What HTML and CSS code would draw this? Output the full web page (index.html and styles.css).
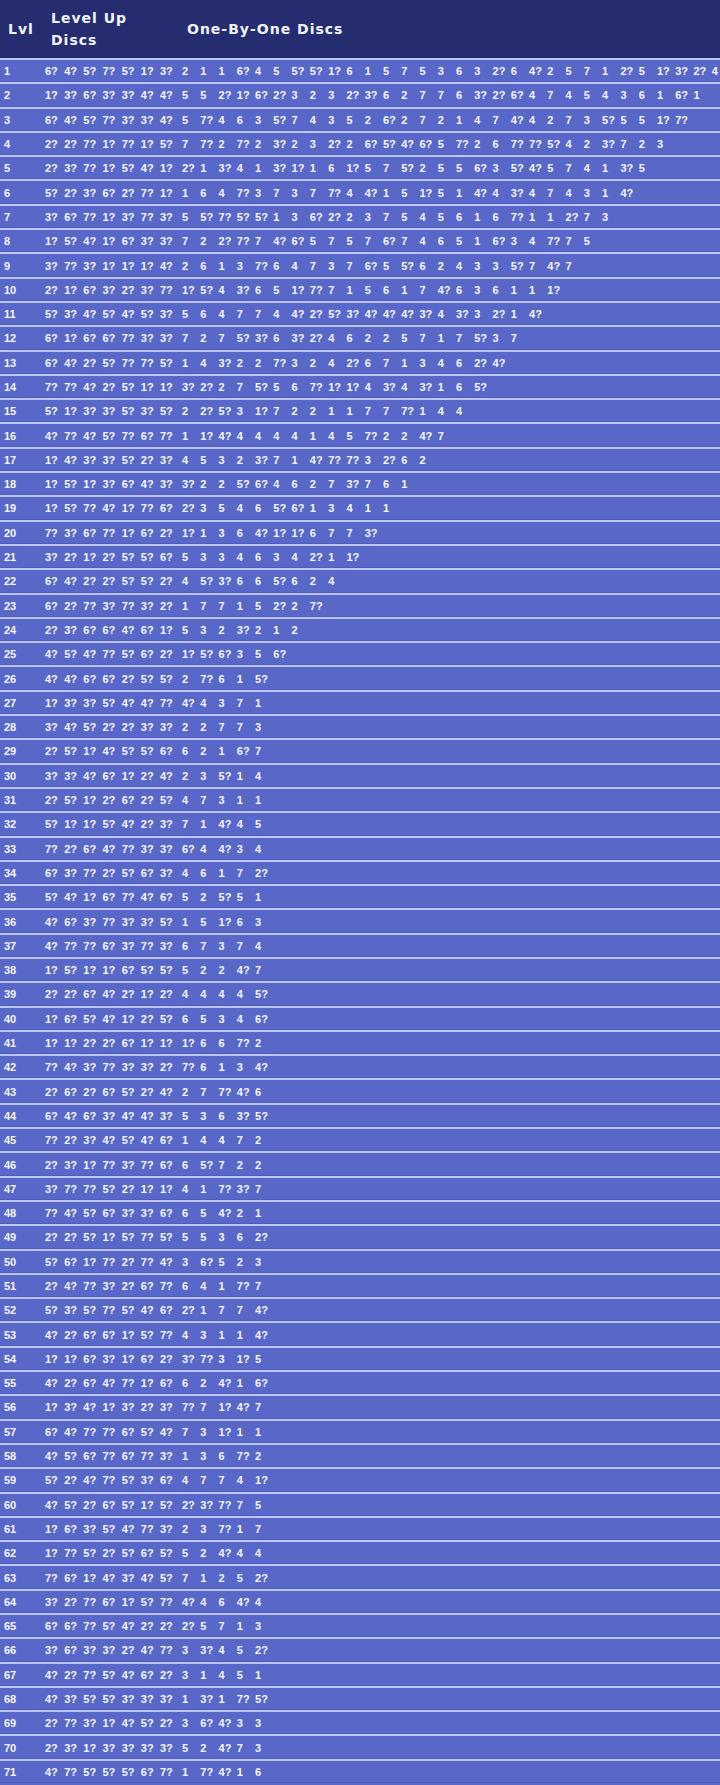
FILE: index.html
```html
<!DOCTYPE html>
<html lang="en">
<head>
<meta charset="utf-8">
<title>Disc Table</title>
<link rel="stylesheet" href="styles.css">
</head>
<body>
<div class="table">
  <div class="head">
    <div class="h-lvl">Lvl</div>
    <div class="h-lu">Level Up<br>Discs</div>
    <div class="h-obo">One-By-One Discs</div>
  </div>
  <div class="row"><div class="lvl">1</div><div class="lu"><span>6?</span><span>4?</span><span>5?</span><span>7?</span><span>5?</span><span>1?</span><span>3?</span></div><div class="obo"><span>2</span><span>1</span><span>1</span><span>6?</span><span>4</span><span>5</span><span>5?</span><span>5?</span><span>1?</span><span>6</span><span>1</span><span>5</span><span>7</span><span>5</span><span>3</span><span>6</span><span>3</span><span>2?</span><span>6</span><span>4?</span><span>2</span><span>5</span><span>7</span><span>1</span><span>2?</span><span>5</span><span>1?</span><span>3?</span><span>2?</span><span>4</span></div></div>
  <div class="row"><div class="lvl">2</div><div class="lu"><span>1?</span><span>3?</span><span>6?</span><span>3?</span><span>3?</span><span>4?</span><span>4?</span></div><div class="obo"><span>5</span><span>5</span><span>2?</span><span>1?</span><span>6?</span><span>2?</span><span>3</span><span>2</span><span>3</span><span>2?</span><span>3?</span><span>6</span><span>2</span><span>7</span><span>7</span><span>6</span><span>3?</span><span>2?</span><span>6?</span><span>4</span><span>7</span><span>4</span><span>5</span><span>4</span><span>3</span><span>6</span><span>1</span><span>6?</span><span>1</span></div></div>
  <div class="row"><div class="lvl">3</div><div class="lu"><span>6?</span><span>4?</span><span>5?</span><span>7?</span><span>3?</span><span>3?</span><span>4?</span></div><div class="obo"><span>5</span><span>7?</span><span>4</span><span>6</span><span>3</span><span>5?</span><span>7</span><span>4</span><span>3</span><span>5</span><span>2</span><span>6?</span><span>2</span><span>7</span><span>2</span><span>1</span><span>4</span><span>7</span><span>4?</span><span>4</span><span>2</span><span>7</span><span>3</span><span>5?</span><span>5</span><span>5</span><span>1?</span><span>7?</span></div></div>
  <div class="row"><div class="lvl">4</div><div class="lu"><span>2?</span><span>2?</span><span>7?</span><span>1?</span><span>7?</span><span>1?</span><span>5?</span></div><div class="obo"><span>7</span><span>7?</span><span>2</span><span>7?</span><span>2</span><span>3?</span><span>2</span><span>3</span><span>2?</span><span>2</span><span>6?</span><span>5?</span><span>4?</span><span>6?</span><span>5</span><span>7?</span><span>2</span><span>6</span><span>7?</span><span>7?</span><span>5?</span><span>4</span><span>2</span><span>3?</span><span>7</span><span>2</span><span>3</span></div></div>
  <div class="row"><div class="lvl">5</div><div class="lu"><span>2?</span><span>3?</span><span>7?</span><span>1?</span><span>5?</span><span>4?</span><span>1?</span></div><div class="obo"><span>2?</span><span>1</span><span>3?</span><span>4</span><span>1</span><span>3?</span><span>1?</span><span>1</span><span>6</span><span>1?</span><span>5</span><span>7</span><span>5?</span><span>2</span><span>5</span><span>5</span><span>6?</span><span>3</span><span>5?</span><span>4?</span><span>5</span><span>7</span><span>4</span><span>1</span><span>3?</span><span>5</span></div></div>
  <div class="row"><div class="lvl">6</div><div class="lu"><span>5?</span><span>2?</span><span>3?</span><span>6?</span><span>2?</span><span>7?</span><span>1?</span></div><div class="obo"><span>1</span><span>6</span><span>4</span><span>7?</span><span>3</span><span>7</span><span>3</span><span>7</span><span>7?</span><span>4</span><span>4?</span><span>1</span><span>5</span><span>1?</span><span>5</span><span>1</span><span>4?</span><span>4</span><span>3?</span><span>4</span><span>7</span><span>4</span><span>3</span><span>1</span><span>4?</span></div></div>
  <div class="row"><div class="lvl">7</div><div class="lu"><span>3?</span><span>6?</span><span>7?</span><span>1?</span><span>3?</span><span>7?</span><span>3?</span></div><div class="obo"><span>5</span><span>5?</span><span>7?</span><span>5?</span><span>5?</span><span>1</span><span>3</span><span>6?</span><span>2?</span><span>2</span><span>3</span><span>7</span><span>5</span><span>4</span><span>5</span><span>6</span><span>1</span><span>6</span><span>7?</span><span>1</span><span>1</span><span>2?</span><span>7</span><span>3</span></div></div>
  <div class="row"><div class="lvl">8</div><div class="lu"><span>1?</span><span>5?</span><span>4?</span><span>1?</span><span>6?</span><span>3?</span><span>3?</span></div><div class="obo"><span>7</span><span>2</span><span>2?</span><span>7?</span><span>7</span><span>4?</span><span>6?</span><span>5</span><span>7</span><span>5</span><span>7</span><span>6?</span><span>7</span><span>4</span><span>6</span><span>5</span><span>1</span><span>6?</span><span>3</span><span>4</span><span>7?</span><span>7</span><span>5</span></div></div>
  <div class="row"><div class="lvl">9</div><div class="lu"><span>3?</span><span>7?</span><span>3?</span><span>1?</span><span>1?</span><span>1?</span><span>4?</span></div><div class="obo"><span>2</span><span>6</span><span>1</span><span>3</span><span>7?</span><span>6</span><span>4</span><span>7</span><span>3</span><span>7</span><span>6?</span><span>5</span><span>5?</span><span>6</span><span>2</span><span>4</span><span>3</span><span>3</span><span>5?</span><span>7</span><span>4?</span><span>7</span></div></div>
  <div class="row"><div class="lvl">10</div><div class="lu"><span>2?</span><span>1?</span><span>6?</span><span>3?</span><span>2?</span><span>3?</span><span>7?</span></div><div class="obo"><span>1?</span><span>5?</span><span>4</span><span>3?</span><span>6</span><span>5</span><span>1?</span><span>7?</span><span>7</span><span>1</span><span>5</span><span>6</span><span>1</span><span>7</span><span>4?</span><span>6</span><span>3</span><span>6</span><span>1</span><span>1</span><span>1?</span></div></div>
  <div class="row"><div class="lvl">11</div><div class="lu"><span>5?</span><span>3?</span><span>4?</span><span>5?</span><span>4?</span><span>5?</span><span>3?</span></div><div class="obo"><span>5</span><span>6</span><span>4</span><span>7</span><span>7</span><span>4</span><span>4?</span><span>2?</span><span>5?</span><span>3?</span><span>4?</span><span>4?</span><span>4?</span><span>3?</span><span>4</span><span>3?</span><span>3</span><span>2?</span><span>1</span><span>4?</span></div></div>
  <div class="row"><div class="lvl">12</div><div class="lu"><span>6?</span><span>1?</span><span>6?</span><span>6?</span><span>7?</span><span>3?</span><span>3?</span></div><div class="obo"><span>7</span><span>2</span><span>7</span><span>5?</span><span>3?</span><span>6</span><span>3?</span><span>2?</span><span>4</span><span>6</span><span>2</span><span>2</span><span>5</span><span>7</span><span>1</span><span>7</span><span>5?</span><span>3</span><span>7</span></div></div>
  <div class="row"><div class="lvl">13</div><div class="lu"><span>6?</span><span>4?</span><span>2?</span><span>5?</span><span>7?</span><span>7?</span><span>5?</span></div><div class="obo"><span>1</span><span>4</span><span>3?</span><span>2</span><span>2</span><span>7?</span><span>3</span><span>2</span><span>4</span><span>2?</span><span>6</span><span>7</span><span>1</span><span>3</span><span>4</span><span>6</span><span>2?</span><span>4?</span></div></div>
  <div class="row"><div class="lvl">14</div><div class="lu"><span>7?</span><span>7?</span><span>4?</span><span>2?</span><span>5?</span><span>1?</span><span>1?</span></div><div class="obo"><span>3?</span><span>2?</span><span>2</span><span>7</span><span>5?</span><span>5</span><span>6</span><span>7?</span><span>1?</span><span>1?</span><span>4</span><span>3?</span><span>4</span><span>3?</span><span>1</span><span>6</span><span>5?</span></div></div>
  <div class="row"><div class="lvl">15</div><div class="lu"><span>5?</span><span>1?</span><span>3?</span><span>3?</span><span>5?</span><span>3?</span><span>5?</span></div><div class="obo"><span>2</span><span>2?</span><span>5?</span><span>3</span><span>1?</span><span>7</span><span>2</span><span>2</span><span>1</span><span>1</span><span>7</span><span>7</span><span>7?</span><span>1</span><span>4</span><span>4</span></div></div>
  <div class="row"><div class="lvl">16</div><div class="lu"><span>4?</span><span>7?</span><span>4?</span><span>5?</span><span>7?</span><span>6?</span><span>7?</span></div><div class="obo"><span>1</span><span>1?</span><span>4?</span><span>4</span><span>4</span><span>4</span><span>4</span><span>1</span><span>4</span><span>5</span><span>7?</span><span>2</span><span>2</span><span>4?</span><span>7</span></div></div>
  <div class="row"><div class="lvl">17</div><div class="lu"><span>1?</span><span>4?</span><span>3?</span><span>3?</span><span>5?</span><span>2?</span><span>3?</span></div><div class="obo"><span>4</span><span>5</span><span>3</span><span>2</span><span>3?</span><span>7</span><span>1</span><span>4?</span><span>7?</span><span>7?</span><span>3</span><span>2?</span><span>6</span><span>2</span></div></div>
  <div class="row"><div class="lvl">18</div><div class="lu"><span>1?</span><span>5?</span><span>1?</span><span>3?</span><span>6?</span><span>4?</span><span>3?</span></div><div class="obo"><span>3?</span><span>2</span><span>2</span><span>5?</span><span>6?</span><span>4</span><span>6</span><span>2</span><span>7</span><span>3?</span><span>7</span><span>6</span><span>1</span></div></div>
  <div class="row"><div class="lvl">19</div><div class="lu"><span>1?</span><span>5?</span><span>7?</span><span>4?</span><span>1?</span><span>7?</span><span>6?</span></div><div class="obo"><span>2?</span><span>3</span><span>5</span><span>4</span><span>6</span><span>5?</span><span>6?</span><span>1</span><span>3</span><span>4</span><span>1</span><span>1</span></div></div>
  <div class="row"><div class="lvl">20</div><div class="lu"><span>7?</span><span>3?</span><span>6?</span><span>7?</span><span>1?</span><span>6?</span><span>2?</span></div><div class="obo"><span>1?</span><span>1</span><span>3</span><span>6</span><span>4?</span><span>1?</span><span>1?</span><span>6</span><span>7</span><span>7</span><span>3?</span></div></div>
  <div class="row"><div class="lvl">21</div><div class="lu"><span>3?</span><span>2?</span><span>1?</span><span>2?</span><span>5?</span><span>5?</span><span>6?</span></div><div class="obo"><span>5</span><span>3</span><span>3</span><span>4</span><span>6</span><span>3</span><span>4</span><span>2?</span><span>1</span><span>1?</span></div></div>
  <div class="row"><div class="lvl">22</div><div class="lu"><span>6?</span><span>4?</span><span>2?</span><span>2?</span><span>5?</span><span>5?</span><span>2?</span></div><div class="obo"><span>4</span><span>5?</span><span>3?</span><span>6</span><span>6</span><span>5?</span><span>6</span><span>2</span><span>4</span></div></div>
  <div class="row"><div class="lvl">23</div><div class="lu"><span>6?</span><span>2?</span><span>7?</span><span>3?</span><span>7?</span><span>3?</span><span>2?</span></div><div class="obo"><span>1</span><span>7</span><span>7</span><span>1</span><span>5</span><span>2?</span><span>2</span><span>7?</span></div></div>
  <div class="row"><div class="lvl">24</div><div class="lu"><span>2?</span><span>3?</span><span>6?</span><span>6?</span><span>4?</span><span>6?</span><span>1?</span></div><div class="obo"><span>5</span><span>3</span><span>2</span><span>3?</span><span>2</span><span>1</span><span>2</span></div></div>
  <div class="row"><div class="lvl">25</div><div class="lu"><span>4?</span><span>5?</span><span>4?</span><span>7?</span><span>5?</span><span>6?</span><span>2?</span></div><div class="obo"><span>1?</span><span>5?</span><span>6?</span><span>3</span><span>5</span><span>6?</span></div></div>
  <div class="row"><div class="lvl">26</div><div class="lu"><span>4?</span><span>4?</span><span>6?</span><span>6?</span><span>2?</span><span>5?</span><span>5?</span></div><div class="obo"><span>2</span><span>7?</span><span>6</span><span>1</span><span>5?</span></div></div>
  <div class="row"><div class="lvl">27</div><div class="lu"><span>1?</span><span>3?</span><span>3?</span><span>5?</span><span>4?</span><span>4?</span><span>7?</span></div><div class="obo"><span>4?</span><span>4</span><span>3</span><span>7</span><span>1</span></div></div>
  <div class="row"><div class="lvl">28</div><div class="lu"><span>3?</span><span>4?</span><span>5?</span><span>2?</span><span>2?</span><span>3?</span><span>3?</span></div><div class="obo"><span>2</span><span>2</span><span>7</span><span>7</span><span>3</span></div></div>
  <div class="row"><div class="lvl">29</div><div class="lu"><span>2?</span><span>5?</span><span>1?</span><span>4?</span><span>5?</span><span>5?</span><span>6?</span></div><div class="obo"><span>6</span><span>2</span><span>1</span><span>6?</span><span>7</span></div></div>
  <div class="row"><div class="lvl">30</div><div class="lu"><span>3?</span><span>3?</span><span>4?</span><span>6?</span><span>1?</span><span>2?</span><span>4?</span></div><div class="obo"><span>2</span><span>3</span><span>5?</span><span>1</span><span>4</span></div></div>
  <div class="row"><div class="lvl">31</div><div class="lu"><span>2?</span><span>5?</span><span>1?</span><span>2?</span><span>6?</span><span>2?</span><span>5?</span></div><div class="obo"><span>4</span><span>7</span><span>3</span><span>1</span><span>1</span></div></div>
  <div class="row"><div class="lvl">32</div><div class="lu"><span>5?</span><span>1?</span><span>1?</span><span>5?</span><span>4?</span><span>2?</span><span>3?</span></div><div class="obo"><span>7</span><span>1</span><span>4?</span><span>4</span><span>5</span></div></div>
  <div class="row"><div class="lvl">33</div><div class="lu"><span>7?</span><span>2?</span><span>6?</span><span>4?</span><span>7?</span><span>3?</span><span>3?</span></div><div class="obo"><span>6?</span><span>4</span><span>4?</span><span>3</span><span>4</span></div></div>
  <div class="row"><div class="lvl">34</div><div class="lu"><span>6?</span><span>3?</span><span>7?</span><span>2?</span><span>5?</span><span>6?</span><span>3?</span></div><div class="obo"><span>4</span><span>6</span><span>1</span><span>7</span><span>2?</span></div></div>
  <div class="row"><div class="lvl">35</div><div class="lu"><span>5?</span><span>4?</span><span>1?</span><span>6?</span><span>7?</span><span>4?</span><span>6?</span></div><div class="obo"><span>5</span><span>2</span><span>5?</span><span>5</span><span>1</span></div></div>
  <div class="row"><div class="lvl">36</div><div class="lu"><span>4?</span><span>6?</span><span>3?</span><span>7?</span><span>3?</span><span>3?</span><span>5?</span></div><div class="obo"><span>1</span><span>5</span><span>1?</span><span>6</span><span>3</span></div></div>
  <div class="row"><div class="lvl">37</div><div class="lu"><span>4?</span><span>7?</span><span>7?</span><span>6?</span><span>3?</span><span>7?</span><span>3?</span></div><div class="obo"><span>6</span><span>7</span><span>3</span><span>7</span><span>4</span></div></div>
  <div class="row"><div class="lvl">38</div><div class="lu"><span>1?</span><span>5?</span><span>1?</span><span>1?</span><span>6?</span><span>5?</span><span>5?</span></div><div class="obo"><span>5</span><span>2</span><span>2</span><span>4?</span><span>7</span></div></div>
  <div class="row"><div class="lvl">39</div><div class="lu"><span>2?</span><span>2?</span><span>6?</span><span>4?</span><span>2?</span><span>1?</span><span>2?</span></div><div class="obo"><span>4</span><span>4</span><span>4</span><span>4</span><span>5?</span></div></div>
  <div class="row"><div class="lvl">40</div><div class="lu"><span>1?</span><span>6?</span><span>5?</span><span>4?</span><span>1?</span><span>2?</span><span>5?</span></div><div class="obo"><span>6</span><span>5</span><span>3</span><span>4</span><span>6?</span></div></div>
  <div class="row"><div class="lvl">41</div><div class="lu"><span>1?</span><span>1?</span><span>2?</span><span>2?</span><span>6?</span><span>1?</span><span>1?</span></div><div class="obo"><span>1?</span><span>6</span><span>6</span><span>7?</span><span>2</span></div></div>
  <div class="row"><div class="lvl">42</div><div class="lu"><span>7?</span><span>4?</span><span>3?</span><span>7?</span><span>3?</span><span>3?</span><span>2?</span></div><div class="obo"><span>7?</span><span>6</span><span>1</span><span>3</span><span>4?</span></div></div>
  <div class="row"><div class="lvl">43</div><div class="lu"><span>2?</span><span>6?</span><span>2?</span><span>6?</span><span>5?</span><span>2?</span><span>4?</span></div><div class="obo"><span>2</span><span>7</span><span>7?</span><span>4?</span><span>6</span></div></div>
  <div class="row"><div class="lvl">44</div><div class="lu"><span>6?</span><span>4?</span><span>6?</span><span>3?</span><span>4?</span><span>4?</span><span>3?</span></div><div class="obo"><span>5</span><span>3</span><span>6</span><span>3?</span><span>5?</span></div></div>
  <div class="row"><div class="lvl">45</div><div class="lu"><span>7?</span><span>2?</span><span>3?</span><span>4?</span><span>5?</span><span>4?</span><span>6?</span></div><div class="obo"><span>1</span><span>4</span><span>4</span><span>7</span><span>2</span></div></div>
  <div class="row"><div class="lvl">46</div><div class="lu"><span>2?</span><span>3?</span><span>1?</span><span>7?</span><span>3?</span><span>7?</span><span>6?</span></div><div class="obo"><span>6</span><span>5?</span><span>7</span><span>2</span><span>2</span></div></div>
  <div class="row"><div class="lvl">47</div><div class="lu"><span>3?</span><span>7?</span><span>7?</span><span>5?</span><span>2?</span><span>1?</span><span>1?</span></div><div class="obo"><span>4</span><span>1</span><span>7?</span><span>3?</span><span>7</span></div></div>
  <div class="row"><div class="lvl">48</div><div class="lu"><span>7?</span><span>4?</span><span>5?</span><span>6?</span><span>3?</span><span>3?</span><span>6?</span></div><div class="obo"><span>6</span><span>5</span><span>4?</span><span>2</span><span>1</span></div></div>
  <div class="row"><div class="lvl">49</div><div class="lu"><span>2?</span><span>2?</span><span>5?</span><span>1?</span><span>5?</span><span>7?</span><span>5?</span></div><div class="obo"><span>5</span><span>5</span><span>3</span><span>6</span><span>2?</span></div></div>
  <div class="row"><div class="lvl">50</div><div class="lu"><span>5?</span><span>6?</span><span>1?</span><span>7?</span><span>2?</span><span>7?</span><span>4?</span></div><div class="obo"><span>3</span><span>6?</span><span>5</span><span>2</span><span>3</span></div></div>
  <div class="row"><div class="lvl">51</div><div class="lu"><span>2?</span><span>4?</span><span>7?</span><span>3?</span><span>2?</span><span>6?</span><span>7?</span></div><div class="obo"><span>6</span><span>4</span><span>1</span><span>7?</span><span>7</span></div></div>
  <div class="row"><div class="lvl">52</div><div class="lu"><span>5?</span><span>3?</span><span>5?</span><span>7?</span><span>5?</span><span>4?</span><span>6?</span></div><div class="obo"><span>2?</span><span>1</span><span>7</span><span>7</span><span>4?</span></div></div>
  <div class="row"><div class="lvl">53</div><div class="lu"><span>4?</span><span>2?</span><span>6?</span><span>6?</span><span>1?</span><span>5?</span><span>7?</span></div><div class="obo"><span>4</span><span>3</span><span>1</span><span>1</span><span>4?</span></div></div>
  <div class="row"><div class="lvl">54</div><div class="lu"><span>1?</span><span>1?</span><span>6?</span><span>3?</span><span>1?</span><span>6?</span><span>2?</span></div><div class="obo"><span>3?</span><span>7?</span><span>3</span><span>1?</span><span>5</span></div></div>
  <div class="row"><div class="lvl">55</div><div class="lu"><span>4?</span><span>2?</span><span>6?</span><span>4?</span><span>7?</span><span>1?</span><span>6?</span></div><div class="obo"><span>6</span><span>2</span><span>4?</span><span>1</span><span>6?</span></div></div>
  <div class="row"><div class="lvl">56</div><div class="lu"><span>1?</span><span>3?</span><span>4?</span><span>1?</span><span>3?</span><span>2?</span><span>3?</span></div><div class="obo"><span>7?</span><span>7</span><span>1?</span><span>4?</span><span>7</span></div></div>
  <div class="row"><div class="lvl">57</div><div class="lu"><span>6?</span><span>4?</span><span>7?</span><span>7?</span><span>6?</span><span>5?</span><span>4?</span></div><div class="obo"><span>7</span><span>3</span><span>1?</span><span>1</span><span>1</span></div></div>
  <div class="row"><div class="lvl">58</div><div class="lu"><span>4?</span><span>5?</span><span>6?</span><span>7?</span><span>6?</span><span>7?</span><span>3?</span></div><div class="obo"><span>1</span><span>3</span><span>6</span><span>7?</span><span>2</span></div></div>
  <div class="row"><div class="lvl">59</div><div class="lu"><span>5?</span><span>2?</span><span>4?</span><span>7?</span><span>5?</span><span>3?</span><span>6?</span></div><div class="obo"><span>4</span><span>7</span><span>7</span><span>4</span><span>1?</span></div></div>
  <div class="row"><div class="lvl">60</div><div class="lu"><span>4?</span><span>5?</span><span>2?</span><span>6?</span><span>5?</span><span>1?</span><span>5?</span></div><div class="obo"><span>2?</span><span>3?</span><span>7?</span><span>7</span><span>5</span></div></div>
  <div class="row"><div class="lvl">61</div><div class="lu"><span>1?</span><span>6?</span><span>3?</span><span>5?</span><span>4?</span><span>7?</span><span>3?</span></div><div class="obo"><span>2</span><span>3</span><span>7?</span><span>1</span><span>7</span></div></div>
  <div class="row"><div class="lvl">62</div><div class="lu"><span>1?</span><span>7?</span><span>5?</span><span>2?</span><span>5?</span><span>6?</span><span>5?</span></div><div class="obo"><span>5</span><span>2</span><span>4?</span><span>4</span><span>4</span></div></div>
  <div class="row"><div class="lvl">63</div><div class="lu"><span>7?</span><span>6?</span><span>1?</span><span>4?</span><span>3?</span><span>4?</span><span>5?</span></div><div class="obo"><span>7</span><span>1</span><span>2</span><span>5</span><span>2?</span></div></div>
  <div class="row"><div class="lvl">64</div><div class="lu"><span>3?</span><span>2?</span><span>7?</span><span>6?</span><span>1?</span><span>5?</span><span>7?</span></div><div class="obo"><span>4?</span><span>4</span><span>6</span><span>4?</span><span>4</span></div></div>
  <div class="row"><div class="lvl">65</div><div class="lu"><span>6?</span><span>6?</span><span>7?</span><span>5?</span><span>4?</span><span>2?</span><span>2?</span></div><div class="obo"><span>2?</span><span>5</span><span>7</span><span>1</span><span>3</span></div></div>
  <div class="row"><div class="lvl">66</div><div class="lu"><span>3?</span><span>6?</span><span>3?</span><span>3?</span><span>2?</span><span>4?</span><span>7?</span></div><div class="obo"><span>3</span><span>3?</span><span>4</span><span>5</span><span>2?</span></div></div>
  <div class="row"><div class="lvl">67</div><div class="lu"><span>4?</span><span>2?</span><span>7?</span><span>5?</span><span>4?</span><span>6?</span><span>2?</span></div><div class="obo"><span>3</span><span>1</span><span>4</span><span>5</span><span>1</span></div></div>
  <div class="row"><div class="lvl">68</div><div class="lu"><span>4?</span><span>3?</span><span>5?</span><span>5?</span><span>3?</span><span>3?</span><span>3?</span></div><div class="obo"><span>1</span><span>3?</span><span>1</span><span>7?</span><span>5?</span></div></div>
  <div class="row"><div class="lvl">69</div><div class="lu"><span>2?</span><span>7?</span><span>3?</span><span>1?</span><span>4?</span><span>5?</span><span>2?</span></div><div class="obo"><span>3</span><span>6?</span><span>4?</span><span>3</span><span>3</span></div></div>
  <div class="row"><div class="lvl">70</div><div class="lu"><span>2?</span><span>3?</span><span>1?</span><span>3?</span><span>3?</span><span>3?</span><span>3?</span></div><div class="obo"><span>5</span><span>2</span><span>4?</span><span>7</span><span>3</span></div></div>
  <div class="row"><div class="lvl">71</div><div class="lu"><span>4?</span><span>7?</span><span>5?</span><span>5?</span><span>5?</span><span>6?</span><span>7?</span></div><div class="obo"><span>1</span><span>7?</span><span>4?</span><span>1</span><span>6</span></div></div>
</div>
</body>
</html>
```
FILE: styles.css
```css
html, body {
  margin: 0;
  padding: 0;
  background: #5867c8;
}

.table {
  width: 720px;
  overflow: hidden;
  font-family: "Liberation Sans", Arial, sans-serif;
  color: #f4f5ff;
}

.head {
  display: grid;
  grid-template-columns: 45px 137px 1fr;
  height: 58px;
  align-items: center;
  background: #252c6f;
  font-family: "DejaVu Sans", Verdana, sans-serif;
  font-weight: bold;
  font-size: 14px;
  letter-spacing: 1px;
  line-height: 22px;
  color: #f2f3ff;
}

.h-lvl { padding-left: 8px; }
.h-lu { padding-left: 6px; }
.h-obo { padding-left: 5px; }

.row {
  display: grid;
  grid-template-columns: 45px 137px 1fr;
  align-items: center;
  height: 22.3px;
  border-top: 2px solid #bcc5f4;
  box-shadow: inset 0 -1px 0 #4e5cbb;
  background: #5867c8;
  font-size: 11px;
  font-weight: bold;
  white-space: nowrap;
}

.lvl { padding-left: 4px; }

.lu, .obo {
  display: flex;
}

.lu span {
  flex: 0 0 19.17px;
}

.obo span {
  flex: 0 0 18.28px;
}
```
